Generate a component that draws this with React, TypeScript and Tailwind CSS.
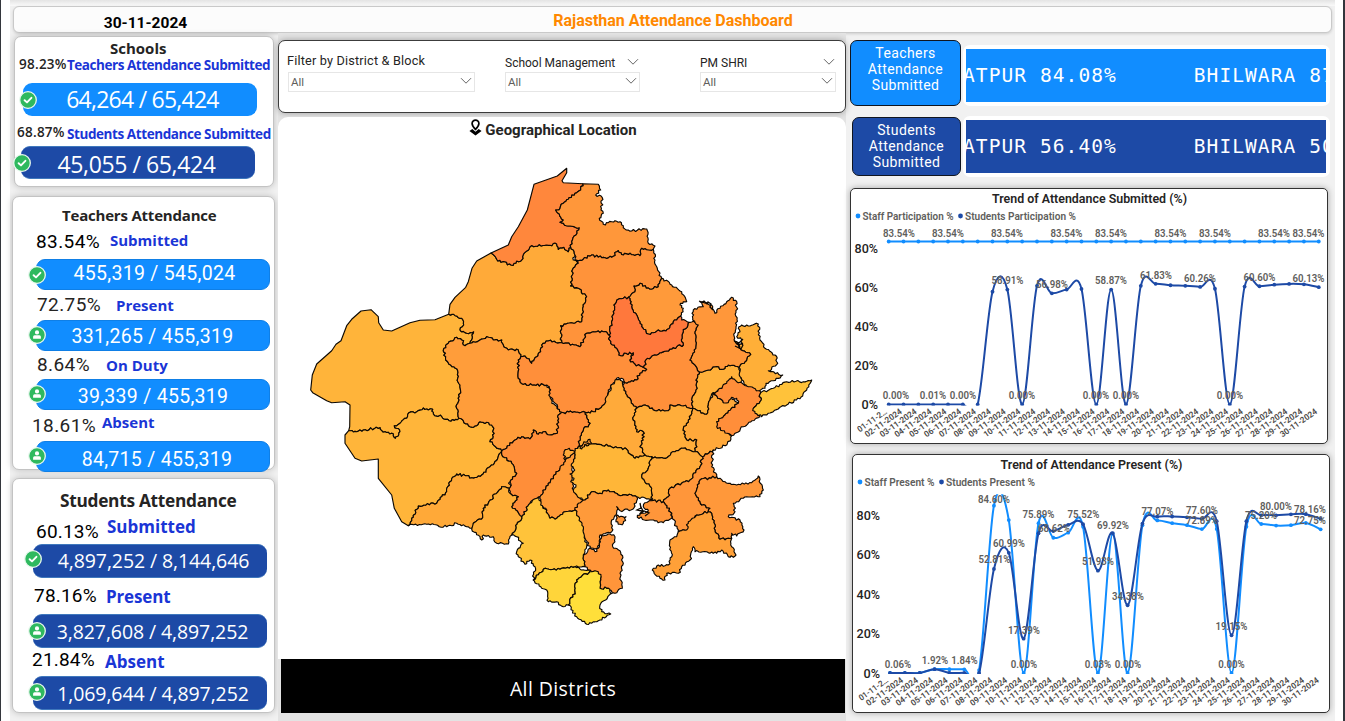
import React from "react";

const SANS = "font-['Open_Sans','Noto_Sans',sans-serif]";
const DIN = "font-['Roboto','Liberation_Sans',sans-serif]";

/* ---------- shared pieces ---------- */

function Badge({ kind, className }: { kind: "check" | "user"; className: string }) {
  return (
    <svg viewBox="0 0 18 18" className={"absolute h-[18px] w-[18px] " + className}>
      <circle cx="9" cy="9" r="8.3" fill="#2fb95f" stroke="#e9f8ee" strokeWidth="1.3" />
      {kind === "check" ? (
        <path d="M5.6 9.2 8 11.4 12.4 6.8" fill="none" stroke="#fff" strokeWidth="1.9" strokeLinecap="round" strokeLinejoin="round" />
      ) : (
        <path d="M9 4.3a2.100 2.100 0 1 1 0 4.200 2.100 2.100 0 0 1 0-4.200ZM5.100 12.800V10.800q0-1.500 1.500-1.500h4.800q1.500 0 1.500 1.500v2Z" fill="#fff" />
      )}
    </svg>
  );
}

function Pill({ value, kind, className, textClass, badgeClass }: { value: string; kind: "check" | "user"; className: string; textClass: string; badgeClass: string }) {
  return (
    <div className={"relative flex shrink-0 items-center justify-center rounded-[9px] leading-none text-white whitespace-nowrap " + className}>
      <Badge kind={kind} className={badgeClass} />
      <span className={textClass}>{value}</span>
    </div>
  );
}

function Stat({ pct, label, className, pctClass, labelClass }: { pct: string; label: string; className: string; pctClass: string; labelClass: string }) {
  return (
    <div className={"flex shrink-0 items-center leading-none whitespace-nowrap " + className}>
      <span className={"shrink-0 " + pctClass}>{pct}</span>
      <span className={SANS + " font-bold text-[#1a35d6] " + labelClass}>{label}</span>
    </div>
  );
}

const CARD = "flex flex-col rounded-[7px] border border-[#c3c3c3] bg-white shadow-[0_0_7px_rgba(0,0,0,0.22)] ";
const TEACH = "ml-[23px] h-[31px] w-[234px] border border-[#0f7fe6] bg-[#118dff] ";
const STUD = "h-[34px] w-[234px] border-y border-[#3f78bd] bg-[#1d4aa6] ";
const PCT = DIN + " text-[19px] ";
const TNUM = DIN + " text-[19.5px] tracking-[0.3px] ";
const SNUM = SANS + " font-medium text-[19.5px] tracking-[-0.1px] ";
const SMALL_PCT = SANS + " font-semibold text-[13.5px] tracking-[0.25px] text-[#252423] ";

/* ---------- map ---------- */

// Vertices are thirds of a pixel inside four sheets; a letter selects the sheet, "~" toggles smooth borders.
const SHEETS: Record<string, [number, number]> = { a: [300, 160], b: [540, 160], c: [300, 380], d: [540, 380] };

const DISTRICTS: { fill: string; d: string }[] = [
  { fill: "#ffb43a", d: "a ~ 446,463 405,479 360,481 330,488 275,513 250,510 236,488 235,470 213,449 183,453 155,478 140,497 123,542 108,553 95,572 50,612 37,645 32,690 38,698 c 80,62 95,68 135,65 150,75 149,140 146,152 ~ 160,156 190,150 240,143 245,152 280,162 286,175 300,155 283,137 300,130 320,115 327,98 350,95 370,84 385,90 398,88 400,102 425,110 447,122 477,115 470,85 478,50 480,15 a 473,655 471,627 447,613 437,600 432,565 447,545 470,532 485,540 495,557 510,550 521,515 500,520 480,510 491,495 489,480 470,468 446,463" },
  { fill: "#ffb53a", d: "c 146,152 160,156 190,150 240,143 245,152 280,162 286,175 300,155 283,137 300,130 320,115 327,98 350,95 370,84 385,90 398,88 400,102 425,110 447,122 477,115 490,122 510,140 530,137 540,125 560,127 578,140 580,170 570,185 605,212 583,250 545,285 515,293 470,282 450,305 440,335 410,370 355,378 335,415 325,437 ~ 305,425 283,385 275,345 235,295 235,237 185,243 165,235 135,190 135,165 146,152" },
  { fill: "#ffaa39", d: "a ~ 573,279 530,303 516,325 505,365 497,382 465,412 450,433 446,463 ~ 470,468 489,480 491,495 480,510 500,520 521,515 510,550 540,540 560,530 580,540 605,540 610,555 625,570 655,570 662,590 675,588 695,610 710,590 722,575 725,555 745,543 785,548 b 62,497 100,490 125,485 128,450 140,410 115,385 92,378 97,345 98,328 115,310 100,300 105,285 92,262 85,275 72,262 55,268 50,252 20,255 a 690,260 672,280 665,300 633,315 590,298 573,279" },
  { fill: "#ff873c", d: "a ~ 573,279 625,255 635,230 655,200 682,150 702,73 772,48 800,25 b 80,38 66,62 70,68 128,71 ~ 122,90 105,100 85,118 70,130 60,145 47,150 58,162 70,180 60,187 90,198 118,203 108,225 95,245 92,262 85,275 72,262 55,268 50,252 20,255 a 690,260 672,280 665,300 633,315 590,298 573,279" },
  { fill: "#ff973a", d: "b 128,71 ~ 175,73 ~ 182,90 167,105 187,113 183,150 190,160 178,175 190,193 225,182 240,185 250,203 275,213 320,207 325,250 345,258 340,268 325,270 305,265 300,287 270,280 250,285 235,272 215,292 185,293 155,285 130,298 105,300 105,285 92,262 95,245 108,225 118,203 90,198 60,187 70,180 58,162 47,150 60,145 70,130 85,118 105,100 122,90 128,71" },
  { fill: "#ff933a", d: "b 105,300 130,298 155,285 185,293 215,292 235,272 250,285 270,280 300,287 305,265 325,270 340,268 345,300 352,325 365,355 355,380 330,388 300,370 282,378 285,395 265,412 235,418 222,435 222,460 215,490 207,525 190,515 160,515 140,520 120,560 108,555 65,548 62,497 100,490 125,485 128,450 140,410 115,385 92,378 97,345 98,328 115,310 105,300" },
  { fill: "#ff9a3a", d: "b 265,412 285,395 282,378 300,370 330,388 355,380 365,355 395,375 425,395 440,425 430,425 420,435 430,445 422,468 400,485 378,513 355,510 325,522 305,500 290,465 275,440 273,425 265,412" },
  { fill: "#ff9d3a", d: "a 495,557 510,550 540,540 560,530 580,540 605,540 610,555 625,570 655,570 662,590 655,600 655,655 670,673 740,675 750,690 c 748,15 755,70 785,97 775,105 772,160 750,165 730,155 715,163 700,150 690,177 665,170 645,180 605,212 570,185 580,170 578,140 560,127 540,125 530,137 510,140 490,122 477,115 470,85 478,50 480,15 a 473,655 471,627 447,613 437,600 432,565 447,545 470,532 485,540 495,557" },
  { fill: "#ff8f3a", d: "a 662,590 675,588 695,610 710,590 722,575 725,555 745,543 785,548 b 108,555 120,560 140,520 160,515 190,515 207,525 212,550 230,565 237,585 280,578 270,600 285,612 310,622 320,628 300,640 290,660 255,668 245,655 230,655 205,690 200,715 d 195,70 160,95 135,97 65,97 30,50 28,20 a 740,675 670,673 655,655 655,600 662,590" },
  { fill: "#ff903a", d: "b 445,487 465,487 475,495 465,520 468,560 450,600 465,615 478,635 468,660 472,685 d 468,30 455,60 458,85 430,78 390,75 385,92 340,90 315,75 290,85 262,50 248,15 250,5 b 255,668 290,660 300,640 320,628 310,622 322,595 350,585 380,573 410,560 430,555 425,545 430,515 445,487" },
  { fill: "#ff783c", d: "b 235,418 265,412 273,425 275,440 290,465 305,500 325,522 355,510 378,513 400,485 422,468 425,480 445,487 430,515 425,545 430,555 410,560 380,573 350,585 322,595 310,622 285,612 270,600 280,578 237,585 230,565 212,550 207,525 215,490 222,460 222,435 235,418" },
  { fill: "#ffb03a", d: "b 478,635 505,630 525,620 550,628 565,615 597,622 608,675 575,690 545,685 515,702 d 510,60 505,75 500,103 458,85 455,60 468,30 b 472,685 468,660 478,635" },
  { fill: "#ffaf38", d: "b 605,495 630,498 655,492 660,540 675,565 705,585 713,610 685,632 728,645 700,662 678,670 675,685 655,695 620,680 600,650 597,622 615,605 632,583 600,565 580,545 608,555 605,540 590,530 600,515 595,505 605,495" },
  { fill: "#ff973a", d: "b 575,412 590,425 588,500 582,540 600,565 632,583 615,605 597,622 565,615 550,628 525,620 505,630 478,635 465,615 450,600 468,560 465,520 475,495 458,480 460,450 490,440 480,425 500,428 515,435 525,460 540,445 560,425 575,412" },
  { fill: "#ffa83a", d: "d 458,85 500,103 505,75 510,60 518,40 550,68 575,52 595,70 530,125 575,167 560,195 520,210 488,230 465,215 470,180 440,180 430,145 445,120 458,85" },
  { fill: "#ff8e3a", d: "b 575,650 590,665 625,680 655,692 662,698 d 660,65 640,85 660,110 610,140 575,167 530,140 530,125 595,70 590,55 575,52 565,68 550,68 518,40 540,25 560,10 b 575,650" },
  { fill: "#ffc23a", d: "b 662,698 700,685 740,665 790,665 815,660 800,690 788,708 d 740,75 700,95 665,110 645,100 640,85 660,65 662,38" },
  { fill: "#ffaa3a", d: "d 248,15 240,-5 225,0 205,40 195,70 160,95 135,97 150,130 130,150 120,170 115,200 155,192 210,198 260,208 285,235 315,225 300,200 310,180 310,155 290,155 280,120 290,85 262,50 248,15" },
  { fill: "#ffad3a", d: "d 290,85 315,75 340,90 385,92 390,75 430,78 458,85 445,120 430,145 440,180 470,180 465,215 430,205 405,215 370,235 335,230 315,225 300,200 310,180 310,155 290,155 280,120 290,85" },
  { fill: "#ff8e39", d: "c 605,212 645,180 665,170 690,177 700,150 715,163 730,155 750,165 772,160 775,105 785,97 d 135,97 150,130 130,150 120,170 115,200 88,235 60,265 25,310 0,350 c 690,370 665,410 635,380 655,350 630,340 630,305 650,280 635,250 605,225 605,212" },
  { fill: "#ff9a38", d: "d 100,215 105,235 95,270 100,330 130,360 130,380 105,390 75,395 50,415 30,415 20,390 0,370 0,350 25,310 60,265 80,235 100,215" },
  { fill: "#ffb638", d: "d 115,200 155,192 210,198 260,208 285,235 315,225 335,230 325,265 305,290 335,325 335,360 290,350 268,343 235,345 205,330 180,340 155,335 135,360 110,345 100,330 108,315 92,305 102,295 90,282 104,270 94,258 105,235 100,215 115,200" },
  { fill: "#ffa939", d: "d 75,240 72,215 88,205 105,218 90,232 75,240" },
  { fill: "#ff9c39", d: "d 120,205 132,185 150,178 155,190 140,192 125,207" },
  { fill: "#ffab3a", d: "d 335,230 370,235 405,215 430,205 465,215 488,230 480,260 450,300 390,325 385,350 370,365 335,362 335,325 305,290 325,265 335,230" },
  { fill: "#ff963a", d: "d 488,230 520,210 515,260 530,290 480,300 465,340 485,375 510,385 505,395 470,405 440,450 415,455 405,430 395,400 370,365 385,350 390,325 450,300 480,260 488,230" },
  { fill: "#ff983a", d: "d 530,290 555,305 590,315 635,308 655,288 670,330 660,350 620,350 580,370 585,395 565,410 600,420 612,450 590,468 575,460 575,475 540,478 525,450 515,400 505,395 510,385 485,375 465,340 480,300 530,290" },
  { fill: "#ffa038", d: "d 415,455 440,450 445,425 470,405 505,395 515,400 525,450 540,478 575,475 575,500 588,525 570,532 545,510 530,520 500,515 465,515 460,500 450,540 425,560 415,580 380,580 375,600 360,595 337,570 350,558 385,555 395,530 390,480 410,470 415,455" },
  { fill: "#ff963a", d: "d 292,412 300,400 325,393 310,380 315,368 335,362 370,365 395,400 395,415 370,428 330,420 292,412" },
  { fill: "#ff963a", d: "d 228,408 258,410 250,430 240,433 228,425 228,408" },
  { fill: "#ff9a3a", d: "d 135,360 155,335 180,340 205,330 235,345 268,343 290,350 290,362 278,388 240,392 230,380 230,398 215,420 215,455 180,465 175,505 150,505 130,460 105,390 115,370 135,360" },
  { fill: "#ff953a", d: "d 183,465 210,462 225,470 218,500 240,512 250,550 240,580 247,625 225,640 205,625 180,625 183,590 150,570 135,560 130,530 150,505 165,515 175,505 183,465" },
  { fill: "#ffc33a", d: "c 718,350 722,375 740,390 d 30,415 50,415 75,395 105,390 130,440 140,500 130,530 135,560 105,560 60,568 c 730,568 700,600 705,560 690,540 675,553 655,530 650,515 670,490 650,470 635,465 665,410 690,370 718,350" },
  { fill: "#ffa938", d: "c 605,212 605,225 635,250 650,280 630,305 628,325 605,320 550,385 548,413 520,430 515,445 500,440 470,430 440,440 380,433 325,437 335,415 355,378 410,370 440,335 450,305 470,282 515,293 545,285 583,250 605,212" },
  { fill: "#ffaf39", d: "c 605,320 628,325 630,340 655,350 635,380 665,410 635,465 625,492 590,490 580,470 550,465 545,480 515,448 520,430 548,413 550,385 605,320" },
  { fill: "#ffd53a", d: "c 700,600 730,568 d 60,568 105,560 150,575 110,600 105,635 85,675 70,680 50,665 25,665 20,630 c 725,625 700,600" },
  { fill: "#ffdf3a", d: "d 150,575 175,575 183,590 180,625 205,625 217,640 180,675 185,695 212,702 175,722 140,733 110,710 85,675 105,635 110,600 150,575" },
];

function noise(x: number, y: number, k: number): number {
  const s = Math.sin(x * 12.9898 + y * 78.233 + k * 37.719) * 43758.5453;
  return (s - Math.floor(s)) * 2 - 1;
}

// Breaks each border into short steps; the wobble depends only on the two ends, so neighbours agree.
function borderPath(spec: string): string {
  let sheet: [number, number] = [0, 0];
  let smooth = false;
  const pts: { x: number; y: number; smooth: boolean }[] = [];
  for (const t of spec.trim().split(/\s+/)) {
    if (t === "~") {
      smooth = !smooth;
      continue;
    }
    if (SHEETS[t]) {
      sheet = SHEETS[t];
      continue;
    }
    const [u, v] = t.split(",").map(Number);
    pts.push({ x: sheet[0] + u / 3, y: sheet[1] + v / 3, smooth });
  }
  let out = "M" + pts[0].x.toFixed(1) + " " + pts[0].y.toFixed(1);
  for (let i = 1; i < pts.length; i++) {
    const p = pts[i - 1];
    const q = pts[i];
    const len = Math.hypot(q.x - p.x, q.y - p.y);
    if (!q.smooth && len > 3) {
      const flip = p.x > q.x || (p.x === q.x && p.y > q.y);
      const a = flip ? q : p;
      const b = flip ? p : q;
      const n = Math.max(2, Math.round(len / 1.8));
      const mid: string[] = [];
      for (let k = 1; k < n; k++) {
        const f = k / n;
        const w = noise(Math.round(a.x * 3), Math.round(a.y * 3), k + Math.round(b.x)) * 1.25;
        mid.push("L" + (a.x + (b.x - a.x) * f - ((b.y - a.y) / len) * w).toFixed(1) + " " + (a.y + (b.y - a.y) * f + ((b.x - a.x) / len) * w).toFixed(1));
      }
      if (flip) mid.reverse();
      out += mid.join("");
    }
    out += "L" + q.x.toFixed(1) + " " + q.y.toFixed(1);
  }
  return out + "Z";
}

function DistrictMap() {
  return (
    <svg viewBox="300 160 525 480" className="ml-[22px] h-[480px] w-[525px]">
      {DISTRICTS.map((r, i) => (
        <path key={i} d={borderPath(r.d)} fill={r.fill} stroke="#0c0803" strokeWidth="1.15" strokeLinejoin="round" />
      ))}
      <path d="M699 301l3 1 2-1 3 3 1-2 3 2-1 3 3 3M734 341l5 2 4-4M735 346l6 3 2-4M737 343l3 4" fill="none" stroke="#0c0803" strokeWidth="1.3" />
      <path d="M640 503l1 5-4 2 5 1-2 3 4-3 5 2-4 3M641 507l2 4" fill="none" stroke="#0c0803" strokeWidth="1.3" />
    </svg>
  );
}

/* ---------- charts ---------- */

type Label = [string, number, number];
type Series = { color: string; values: number[] };

function curve(values: number[], x0: number, step: number, y: (v: number) => number): string {
  const p = values.map((v, i) => [x0 + i * step, y(v)]);
  let d = "M" + p[0][0] + " " + p[0][1];
  for (let i = 0; i < p.length - 1; i++) {
    const a = p[Math.max(0, i - 1)];
    const b = p[i];
    const c = p[i + 1];
    const e = p[Math.min(p.length - 1, i + 2)];
    d += `C${b[0] + (c[0] - a[0]) / 6} ${b[1] + (c[1] - a[1]) / 6} ${c[0] - (e[0] - b[0]) / 6} ${c[1] - (e[1] - b[1]) / 6} ${c[0]} ${c[1]}`;
  }
  return d;
}

function Trend(props: { id: string; title: string; titleWidth: number; legend: [string, string, number][]; series: Series[]; labels: Label[]; x0: number; step: number; zero: number; unit: number; top: number; box: [number, number, number, number]; axisX: number; className: string }) {
  const { id, title, titleWidth, legend, series, labels, x0, step, zero, unit, top, box, axisX, className } = props;
  const y = (v: number) => zero - v * unit;
  let lx = box[0] + 7;
  return (
    <svg viewBox={box.join(" ")} className={DIN + " " + className}>
      <defs>
        <clipPath id={id}>
          <rect x={box[0]} y={top} width={box[2]} height={zero + 1 - top} />
        </clipPath>
      </defs>
      <text x={box[0] + box[2] / 2 + 0.5} y={box[1] + 13.5} textAnchor="middle" textLength={titleWidth} lengthAdjust="spacingAndGlyphs" fontSize="13" fontWeight="600" fill="#252423">{title}</text>
      {legend.map(([name, color, w]) => {
        const at = lx;
        lx += w + 10.5;
        return (
          <g key={name}>
            <circle cx={at} cy={box[1] + 27} r="2.4" fill={color} />
            <text x={at + 4.5} y={box[1] + 31} textLength={w - 1} lengthAdjust="spacingAndGlyphs" fontSize="10.8" fontWeight="600" fill="#605e5c">{name}</text>
          </g>
        );
      })}
      {[80, 60, 40, 20, 0].map((v) => (
        <text key={v} x={axisX} y={y(v) + 4.5} textAnchor="end" textLength={v ? 23.5 : 16.5} lengthAdjust="spacingAndGlyphs" fontSize="13" fontWeight="500" fill="#252423">{v + "%"}</text>
      ))}
      <g clipPath={"url(#" + id + ")"}>
        {series.map((s) => (
          <g key={s.color}>
            <path d={curve(s.values, x0, step, y)} fill="none" stroke={s.color} strokeWidth="2" />
            {s.values.map((v, i) => (
              <circle key={i} cx={x0 + i * step} cy={y(v)} r="1.9" fill={s.color} />
            ))}
          </g>
        ))}
      </g>
      {labels.map(([t, cx, cy], i) => (
        <text key={i} x={cx} y={cy + 3.8} textAnchor="middle" textLength={t.length === 6 ? 32 : 26.5} lengthAdjust="spacingAndGlyphs" fontSize="10.6" fontWeight="600" fill="#605e5c">{t}</text>
      ))}
      {series[0].values.map((_, i) => {
        const day = String(i + 1).padStart(2, "0");
        const tx = x0 + i * step - 1;
        const ty = zero + 8.5;
        return (
          <text key={i} x={tx} y={ty} textAnchor="end" transform={`rotate(-35 ${tx} ${ty})`} textLength={i ? 43 : 34} lengthAdjust="spacingAndGlyphs" fontSize="8.4" fontWeight="600" fill="#4a4846">{i ? day + "-11-2024" : "01-11-2…"}</text>
        );
      })}
    </svg>
  );
}

const LIGHT = "#118dff";
const DARK = "#1d4aa6";

const submittedLabels: Label[] = [
  ...[899, 948, 1007, 1066.5, 1111, 1170.5, 1215, 1274, 1308.5].map((x): Label => ["83.54%", x, 233]),
  ["0.00%", 896, 395.5], ["0.01%", 933, 395.5], ["0.00%", 963, 395.5], ["0.00%", 1022, 395.5], ["0.00%", 1096, 395.5], ["0.00%", 1126, 395.5], ["0.00%", 1230, 395.5],
  ["58.91%", 1007.5, 280.5], ["56.98%", 1052, 284.5], ["58.87%", 1111, 280.5], ["61.83%", 1156, 275], ["60.26%", 1200, 278], ["60.60%", 1259.5, 277.5], ["60.13%", 1308.5, 278],
];

const presentLabels: Label[] = [
  ["84.60%", 994, 499], ["75.89%", 1038.5, 514], ["68.62%", 1054, 528], ["75.52%", 1083.5, 514.5], ["69.92%", 1113, 525.5], ["60.99%", 1009, 543], ["52.81%", 994.5, 559.5],
  ["17.39%", 1024, 630], ["51.93%", 1098, 561], ["34.38%", 1128, 596], ["77.07%", 1157.5, 511.5], ["77.60%", 1202, 510.5], ["72.89%", 1202, 520], ["19.15%", 1231.5, 626],
  ["75.20%", 1261, 515.5], ["80.00%", 1276, 506], ["78.16%", 1310, 509.5], ["72.75%", 1310, 520],
  ["0.06%", 898, 664], ["1.92%", 935, 660], ["1.84%", 964.5, 660], ["0.00%", 1024, 664], ["0.03%", 1098, 664], ["0.00%", 1128, 664], ["0.00%", 1231.5, 664],
];

/* ---------- filters and tickers ---------- */

function Chevron({ className }: { className: string }) {
  return (
    <svg viewBox="0 0 12 8" className={"h-[8px] w-[12px] shrink-0 " + className}>
      <path d="M1 1.2 6 6.2 11 1.2" fill="none" stroke="#666" strokeWidth="1" />
    </svg>
  );
}

function Filter({ label, className, arrow, labelClass }: { label: string; className: string; arrow: boolean; labelClass: string }) {
  return (
    <div className={"flex shrink-0 flex-col " + className}>
      <div className={"flex items-center justify-between pr-[1px] leading-none whitespace-nowrap text-[#252423] " + labelClass}>
        <span>{label}</span>
        {arrow && <Chevron className="mb-[3px]" />}
      </div>
      <div className="flex h-[20px] items-center justify-between border border-[#e6e6e6] pr-[2px] pl-[2px] text-[11.5px] leading-none text-[#605e5c]">
        <span className="pt-[2px]">All</span>
        <Chevron className="mb-[2px]" />
      </div>
    </div>
  );
}

function Ticker({ who, tile, strip, first, second, className }: { who: string; tile: string; strip: string; first: string; second: string; className: string }) {
  return (
    <div className={"flex shrink-0 items-end justify-end gap-[2px] " + className}>
      <div className={"flex shrink-0 flex-col items-center rounded-[7px] border border-[#10151f] text-center text-[14px] leading-[16px] tracking-[0.4px] text-white " + tile}>
        <span>{who}</span>
        <span>Attendance</span>
        <span>Submitted</span>
      </div>
      <div className="h-[61px] w-[367px] rounded-[7px] bg-white p-[4px_4px_4px_3px]">
        <div className={"flex h-[53px] items-center overflow-hidden font-['DejaVu_Sans_Mono',monospace] text-[19.5px] leading-none tracking-[1.08px] whitespace-pre text-white " + strip}>
          <span className="-ml-[3px] shrink-0">{"ATPUR " + first + "      BHILWARA " + second}</span>
        </div>
      </div>
    </div>
  );
}

/* ---------- page ---------- */

export default function App() {
  return (
    <div className={"flex h-[721px] w-[1345px] overflow-hidden border-r-2 border-l border-[#33363c] bg-white pr-[8px] pl-[9px] " + DIN}>
      <div className="flex w-[1325px] shrink-0 flex-col bg-[#f1f1f1]">
        <div className="h-[6px] shrink-0 bg-linear-to-b from-[#e4e4e4] to-[#fafafa]" />
        <header className="mx-[3px] flex h-[27px] shrink-0 items-center rounded-[6px] border border-[#c9c9c9] bg-[#fcfcfc] leading-none font-bold whitespace-nowrap shadow-[0_1px_3px_rgba(0,0,0,0.15)]">
          <span className="w-[263px] pt-[8px] text-center text-[15.5px] text-black">30-11-2024</span>
          <span className="ml-[2px] w-[788px] pt-[2px] text-center text-[16px] text-[#ff8800]">Rajasthan Attendance Dashboard</span>
        </header>

        <div className="flex h-[688px] shrink-0">
          {/* left column */}
          <aside className="flex w-[265px] shrink-0 flex-col pt-[3px] pl-[2px]">
            <section className={CARD + "ml-[2px] h-[151px] w-[260px]"}>
              <h2 className={SANS + " h-[24px] shrink-0 pl-[95px] text-[15px] leading-[22px] font-bold text-[#252423]"}>Schools</h2>
              <Stat pct="98.23%" label="Teachers Attendance Submitted" className="h-[9px] pl-[4px]" pctClass={SMALL_PCT + "-mt-[2px] w-[48px]"} labelClass="pt-[1px] text-[13.5px] tracking-[-0.46px]" />
              <Pill value="64,264 / 65,424" kind="check" className="mt-[13px] ml-[8px] h-[33px] w-[234px] bg-[#118dff]" textClass={SANS + " pl-[5px] text-[23px] tracking-[-0.75px]"} badgeClass="top-[8px] left-[-4px]" />
              <Stat pct="68.87%" label="Students Attendance Submitted" className="h-[30px] pt-[3px] pl-[2px]" pctClass={SMALL_PCT + "w-[50px]"} labelClass="pt-[5px] text-[13.5px] tracking-[-0.42px]" />
              <Pill value="45,055 / 65,424" kind="check" className="ml-[6px] h-[33px] w-[234px] border-y border-[#3f78bd] bg-[#1d4aa6]" textClass={SANS + " pr-[3px] pt-[3px] font-medium text-[23px] tracking-[-0.4px]"} badgeClass="top-[7px] left-[-8px]" />
            </section>

            <section className={CARD + "mt-[9px] h-[274px] w-[263px]"}>
              <h2 className={SANS + " h-[38px] shrink-0 pl-[49px] text-[15px] leading-[36px] font-bold tracking-[-0.2px] text-[#252423]"}>Teachers Attendance</h2>
              <Stat pct="83.54%" label="Submitted" className="h-[14px] pl-[23px]" pctClass={PCT + "-mt-[2px] w-[74px] tracking-[0.4px] text-black"} labelClass="pb-[4px] text-[15px]" />
              <Pill value="455,319 / 545,024" kind="check" className={TEACH + "mt-[10px]"} textClass={TNUM + "pl-[3px] pb-[1px]"} badgeClass="top-[6px] left-[-9px]" />
              <Stat pct="72.75%" label="Present" className="h-[30px] pl-[24px]" pctClass={PCT + "-mt-[2px] w-[79px] tracking-[0.4px] text-[#252423]"} labelClass="text-[15px]" />
              <Pill value="331,265 / 455,319" kind="user" className={TEACH} textClass={TNUM + "pt-[3px] pr-[1px]"} badgeClass="top-[5px] left-[-9px]" />
              <Stat pct="8.64%" label="On Duty" className="h-[28px] pl-[24px]" pctClass={PCT + "-mt-[2px] w-[69px] tracking-[0.4px] text-[#252423]"} labelClass="text-[15px]" />
              <Pill value="39,339 / 455,319" kind="user" className={TEACH} textClass={TNUM + "pt-[5px]"} badgeClass="top-[5px] left-[-9px]" />
              <Stat pct="18.61%" label="Absent" className="h-[31px] pl-[19px]" pctClass={PCT + "w-[70px] tracking-[0.4px] text-[#252423]"} labelClass="pb-[6px] text-[15px]" />
              <Pill value="84,715 / 455,319" kind="user" className={TEACH} textClass={TNUM + "pl-[8px] pt-[6px]"} badgeClass="top-[5px] left-[-9px]" />
            </section>

            <section className={CARD + "mt-[8px] h-[235px] w-[263px]"}>
              <h2 className={SANS + " h-[44px] shrink-0 pl-[47px] text-[17.3px] leading-[44px] font-bold tracking-[-0.28px] text-[#252423]"}>Students Attendance</h2>
              <Stat pct="60.13%" label="Submitted" className="h-[14px] pl-[23px]" pctClass={PCT + "w-[71px] pt-[2px] tracking-[0.2px] text-black"} labelClass="pb-[7px] text-[17px]" />
              <Pill value="4,897,252 / 8,144,646" kind="check" className={STUD + "mt-[7px] ml-[20px]"} textClass={SNUM + "pl-[7px]"} badgeClass="top-[5px] left-[-9px]" />
              <Stat pct="78.16%" label="Present" className="h-[36px] pl-[21px]" pctClass={PCT + "-mt-[2px] w-[72px] tracking-[0.2px] text-black"} labelClass="text-[17px] tracking-[-0.15px]" />
              <Pill value="3,827,608 / 4,897,252" kind="user" className={STUD + "ml-[20px]"} textClass={SNUM + "pl-[5px] pt-[1px]"} badgeClass="top-[7px] left-[-5px]" />
              <Stat pct="21.84%" label="Absent" className="h-[28px] pl-[19px]" pctClass={PCT + "w-[73px] pb-[5px] tracking-[0.2px] text-black"} labelClass="pb-[2px] text-[17px]" />
              <Pill value="1,069,644 / 4,897,252" kind="user" className={STUD + "ml-[20px]"} textClass={SNUM + "pl-[6px] pt-[1px]"} badgeClass="top-[6px] left-[-5px]" />
            </section>
          </aside>

          {/* centre column */}
          <main className="ml-[3px] flex w-[568px] shrink-0 flex-col bg-[#e3e3e3] pt-[7px]">
            <section className="flex h-[73px] w-[568px] shrink-0 rounded-[7px] border border-[#3c3c3c] bg-white pt-[12px] pl-[8px] shadow-[0_0_6px_rgba(0,0,0,0.3)]">
              <Filter label="Filter by District & Block" className="ml-[1px] w-[187px]" arrow={false} labelClass="h-[16px] mb-[3px] -ml-[1px] text-[12.7px] tracking-[0.18px]" />
              <Filter label="School Management" className="ml-[30px] w-[135px]" arrow labelClass="h-[16px] mb-[3px] pt-[4px] text-[12px]" />
              <Filter label="PM SHRI" className="ml-[60px] w-[136px]" arrow labelClass="h-[16px] mb-[3px] pt-[4px] text-[12px]" />
            </section>
            <section className="mt-[4px] flex h-[542px] shrink-0 flex-col rounded-t-[10px] bg-white">
              <div className="flex h-[43px] items-start justify-center gap-[3px] pt-[2px] leading-none">
                <svg viewBox="0 0 12 16" className="-ml-[18px] h-[17px] w-[13px]">
                  <path d="M6 1.100a3.200 3.200 0 0 1 3.200 3.200C9.200 6.600 6 9.800 6 9.800S2.800 6.600 2.800 4.300A3.200 3.200 0 0 1 6 1.100Z" fill="none" stroke="#000" strokeWidth="1.6" />
                  <path d="M.3 11.200 3 9.300 6 12 9 9.300 11.700 11.200 6 15.500Z" fill="#000" />
                </svg>
                <span className="pt-[4px] text-[15px] font-bold text-[#252423]">Geographical Location</span>
              </div>
              <DistrictMap />
            </section>
            <div className={SANS + " ml-[3px] flex h-[54px] w-[564px] shrink-0 items-center justify-center bg-black pt-[6px] text-[19.5px] leading-none tracking-[0.4px] text-white"}>All Districts</div>
          </main>

          {/* right column */}
          <div className="flex w-[489px] shrink-0 flex-col pt-[7px] pl-[4px]">
            <Ticker who="Teachers" tile="h-[66px] w-[111px] bg-[#118dff] pt-[4px]" strip="bg-[#118dff]" first="84.08%" second="87.42%" className="h-[66px] w-[480px]" />
            <Ticker who="Students" tile="mb-[1px] h-[59px] w-[109px] bg-[#1d4aa6] pt-[4px]" strip="bg-[#1d4aa6]" first="56.40%" second="50.91%" className="mt-[10px] h-[61px] w-[480px]" />
            <section className="mt-[11px] h-[256px] w-[478px] shrink-0 rounded-[5px] border border-[#333] bg-white shadow-[0_0_6px_rgba(0,0,0,0.3)]">
              <Trend
                id="clip-submitted"
                className="h-[254px] w-[476px]"
                box={[851, 189, 476, 254]}
                title="Trend of Attendance Submitted (%)"
                titleWidth={195}
                legend={[["Staff Participation %", LIGHT, 92], ["Students Participation %", DARK, 112]]}
                x0={888.7}
                step={14.83}
                zero={404.4}
                unit={1.95}
                top={230}
                axisX={878}
                labels={submittedLabels}
                series={[
                  { color: LIGHT, values: Array(30).fill(83.54) },
                  { color: DARK, values: [0, 0, 0, 0.01, 0, 0, 0, 57.8, 58.91, 0, 60.8, 56.98, 58.9, 59.2, 0, 58.87, 0, 60.8, 61.83, 61.1, 60.8, 60.26, 59.3, 0, 60.4, 60.6, 61.4, 61.8, 61.6, 60.13] },
                ]}
              />
            </section>
            <section className="mt-[10px] ml-[2px] h-[259px] w-[478px] shrink-0 rounded-[5px] border border-[#333] bg-white shadow-[0_0_6px_rgba(0,0,0,0.3)]">
              <Trend
                id="clip-present"
                className="h-[257px] w-[476px]"
                box={[853, 455, 476, 257]}
                title="Trend of Attendance Present (%)"
                titleWidth={182}
                legend={[["Staff Present %", LIGHT, 71], ["Students Present %", DARK, 90]]}
                x0={890}
                step={14.85}
                zero={673}
                unit={1.971}
                top={494.3}
                axisX={880}
                labels={presentLabels}
                series={[
                  { color: LIGHT, values: [0.06, 0.06, 0.06, 1.92, 1.9, 1.84, 1.5, 84.9, 77.6, 0, 76, 68.62, 71.2, 74.2, 0.03, 70.6, 0, 75, 77.4, 76, 75, 73, 73, 0, 74.2, 75.6, 74.8, 75, 76.1, 72.9] },
                  { color: DARK, values: [0.06, 0.06, 0.06, 1.92, 0.1, 0.1, 0, 52.81, 60.99, 17.39, 70.9, 72, 75.2, 75.5, 51.93, 71, 34.38, 75.8, 79.3, 79.4, 79, 78.2, 77, 19.15, 77, 80, 80, 80.5, 80.6, 78.16] },
                ]}
              />
            </section>
          </div>
        </div>
      </div>
    </div>
  );
}
